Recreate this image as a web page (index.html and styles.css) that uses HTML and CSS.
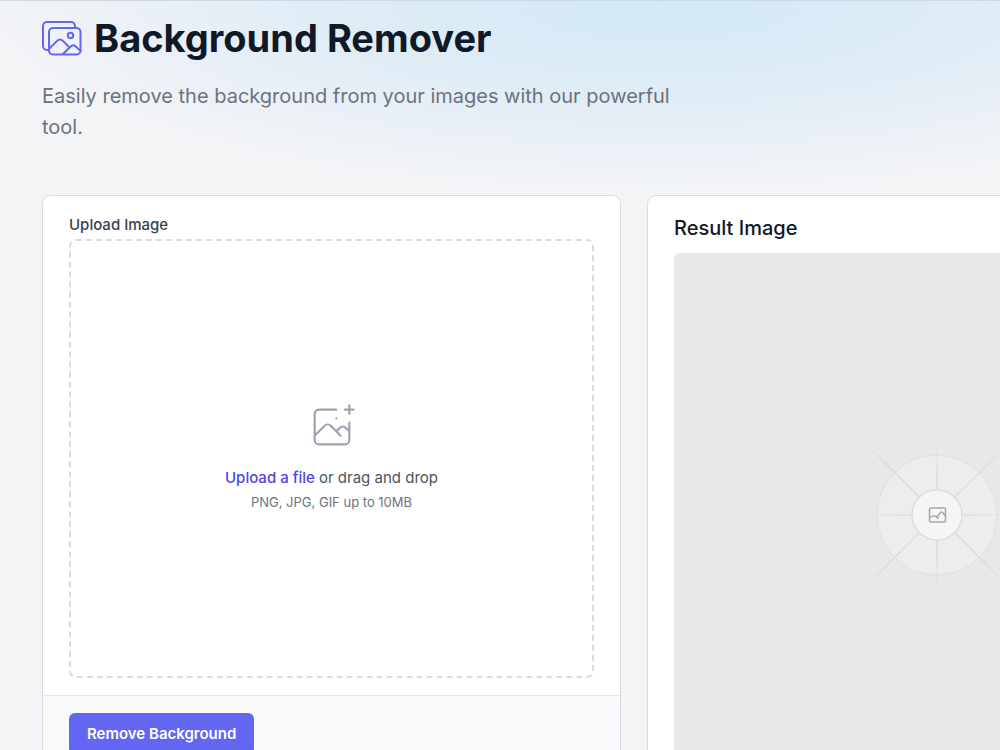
FILE: index.html
```html
<!DOCTYPE html>
<html lang="en">
<head>
<meta charset="utf-8">
<meta name="viewport" content="width=device-width, initial-scale=1">
<title>Background Remover</title>
<link rel="stylesheet" href="styles.css">
</head>
<body>
<main class="page">
  <header class="intro">
    <div class="heading">
      <svg class="heading-icon" viewBox="0 0 40 36" fill="none" stroke="currentColor" stroke-width="2" stroke-linecap="round" stroke-linejoin="round" aria-hidden="true">
        <path d="M7 30H5a4 4 0 0 1-4-4V6a4 4 0 0 1 4-4h24a4 4 0 0 1 4 4v2"/>
        <rect x="7" y="8" width="31.500" height="26.500" rx="4"/>
        <circle cx="28.500" cy="15.500" r="2.700"/>
        <path d="M7.500 28.500l7.500-7.600q3-2.800 6 0l6 6.100M21 34l8-7.800q2.300-2 4.600 0l5 4.800"/>
      </svg>
      <h1 class="title">Background Remover</h1>
    </div>
    <p class="lead">Easily remove the background from your images with our powerful tool.</p>
  </header>
  <div class="panels">
    <form class="card">
      <div class="card-body upload-body">
        <label class="field-label" for="file">Upload Image</label>
        <div class="dropzone">
          <svg class="drop-icon" viewBox="0 0 48 48" fill="none" stroke="currentColor" stroke-width="2" stroke-linecap="round" stroke-linejoin="round" aria-hidden="true">
            <path d="M28 8H12a4 4 0 0 0-4 4v20m32-12v8m0 0v8a4 4 0 0 1-4 4H12a4 4 0 0 1-4-4v-4m32-4-3.172-3.172a4 4 0 0 0-5.656 0L28 28M8 32l9.172-9.172a4 4 0 0 1 5.656 0L28 28m0 0 4 4m4-24h8m-4-4v8m-12 4h.02"/>
          </svg>
          <p class="drop-text"><label class="upload-link" for="file">Upload a file</label> or drag and drop</p>
          <input class="file-input" id="file" type="file" accept="image/*">
          <p class="drop-hint">PNG, JPG, GIF up to 10MB</p>
        </div>
      </div>
      <div class="card-footer">
        <button class="submit" type="button">Remove Background</button>
      </div>
    </form>
    <section class="card result">
      <h2 class="result-title">Result Image</h2>
      <div class="preview">
        <svg class="placeholder" viewBox="0 0 160 160" fill="none" aria-hidden="true">
          <defs>
            <radialGradient id="ray" gradientUnits="userSpaceOnUse" cx="80" cy="80" r="112">
              <stop offset="0.600" stop-color="#d9d9d9"/>
              <stop offset="1" stop-color="#d9d9d9" stop-opacity="0"/>
            </radialGradient>
            <radialGradient id="axis" gradientUnits="userSpaceOnUse" cx="80" cy="80" r="80">
              <stop offset="0.500" stop-color="#d9d9d9"/>
              <stop offset="1" stop-color="#d9d9d9" stop-opacity="0"/>
            </radialGradient>
          </defs>
          <circle cx="80" cy="79" r="60" fill="#ededed" stroke="#e0e0e0"/>
          <path d="M80 0V158M0 79H160" stroke="url(#axis)" stroke-width="1.200"/>
          <path d="M2 1l156 156M158 1L2 157" stroke="url(#ray)" stroke-width="1.200"/>
          <circle cx="80" cy="79" r="25" fill="#f5f5f5" stroke="#d9d9d9" stroke-width="1.200"/>
          <g stroke="#a6a6a6" stroke-width="1.500" stroke-linejoin="round" stroke-linecap="round">
            <rect x="72.500" y="72" width="16" height="14" rx="1"/>
            <path d="M73 81.500q4.500-3.500 8 1M79.500 80.500l1.500-.500 2.500-3.500q1-1 2 0l3 3.500"/>
          </g>
        </svg>
      </div>
    </section>
  </div>
</main>
</body>
</html>
```
FILE: styles.css
```css
* {
  box-sizing: border-box;
}

body {
  margin: 0;
  overflow-x: hidden;
  border-top: 1px solid #cfd9e1;
  background: #f3f4f6 radial-gradient(ellipse 680px 190px at 660px 0, #d1e9f7 0%, #deecf5 45%, #e8eff6 70%, #f3f4f6 100%) no-repeat;
  color: #111827;
  font-family: Inter, "Liberation Sans", sans-serif;
}

h1,
h2,
p {
  margin: 0;
}

.page {
  padding: 15px 42px 42px;
}

.intro {
  max-width: 640px;
  margin-bottom: 52px;
}

.heading {
  display: flex;
  align-items: center;
  gap: 12px;
}

.heading-icon {
  flex: none;
  width: 40px;
  height: 36px;
  color: #6366f1;
}

.title {
  font-size: 38px;
  line-height: 44px;
  font-weight: 700;
  white-space: nowrap;
}

.lead {
  margin-top: 21px;
  color: #6b7280;
  font-size: 20px;
  line-height: 31px;
}

.panels {
  display: grid;
  grid-template-columns: repeat(2, minmax(579px, 1fr));
  align-items: start;
  gap: 26px;
}

.card {
  overflow: hidden;
  border: 1px solid #d8dbe1;
  border-radius: 9px;
  background: #fff;
}

.upload-body {
  padding: 18px 26px 17px;
}

.field-label {
  display: block;
  margin-bottom: 4px;
  color: #374151;
  font-size: 15px;
  line-height: 21px;
  font-weight: 500;
}

.dropzone {
  display: flex;
  flex-direction: column;
  align-items: center;
  justify-content: center;
  min-height: 439px;
  padding-bottom: 2px;
  border: 2px dashed #d8dbe0;
  border-radius: 7px;
}

.drop-icon {
  width: 52px;
  height: 52px;
  color: #9ca3af;
}

.drop-text {
  margin-top: 13px;
  color: #4b5563;
  font-size: 15px;
  line-height: 24px;
}

.upload-link {
  color: #4f46e5;
  font-weight: 500;
  cursor: pointer;
}

.file-input {
  position: absolute;
  width: 1px;
  height: 1px;
  overflow: hidden;
  opacity: 0;
}

.drop-hint {
  color: #6b7280;
  font-size: 13px;
  line-height: 24px;
}

.card-footer {
  padding: 17px 26px;
  border-top: 1px solid #e5e7eb;
  background: #f9fafb;
}

.submit {
  padding: 9px 18px;
  border: 0;
  border-radius: 6px;
  background: #6366f1;
  color: #fff;
  font: 600 15px/24px Inter, "Liberation Sans", sans-serif;
}

.result {
  padding: 18px 26px 26px;
}

.result-title {
  margin-bottom: 10px;
  font-size: 20px;
  line-height: 29px;
  font-weight: 500;
}

.preview {
  display: grid;
  place-items: center;
  aspect-ratio: 1;
  border-radius: 5px;
  background: #e8e8e8;
}

.placeholder {
  width: 160px;
  height: 160px;
}
```
